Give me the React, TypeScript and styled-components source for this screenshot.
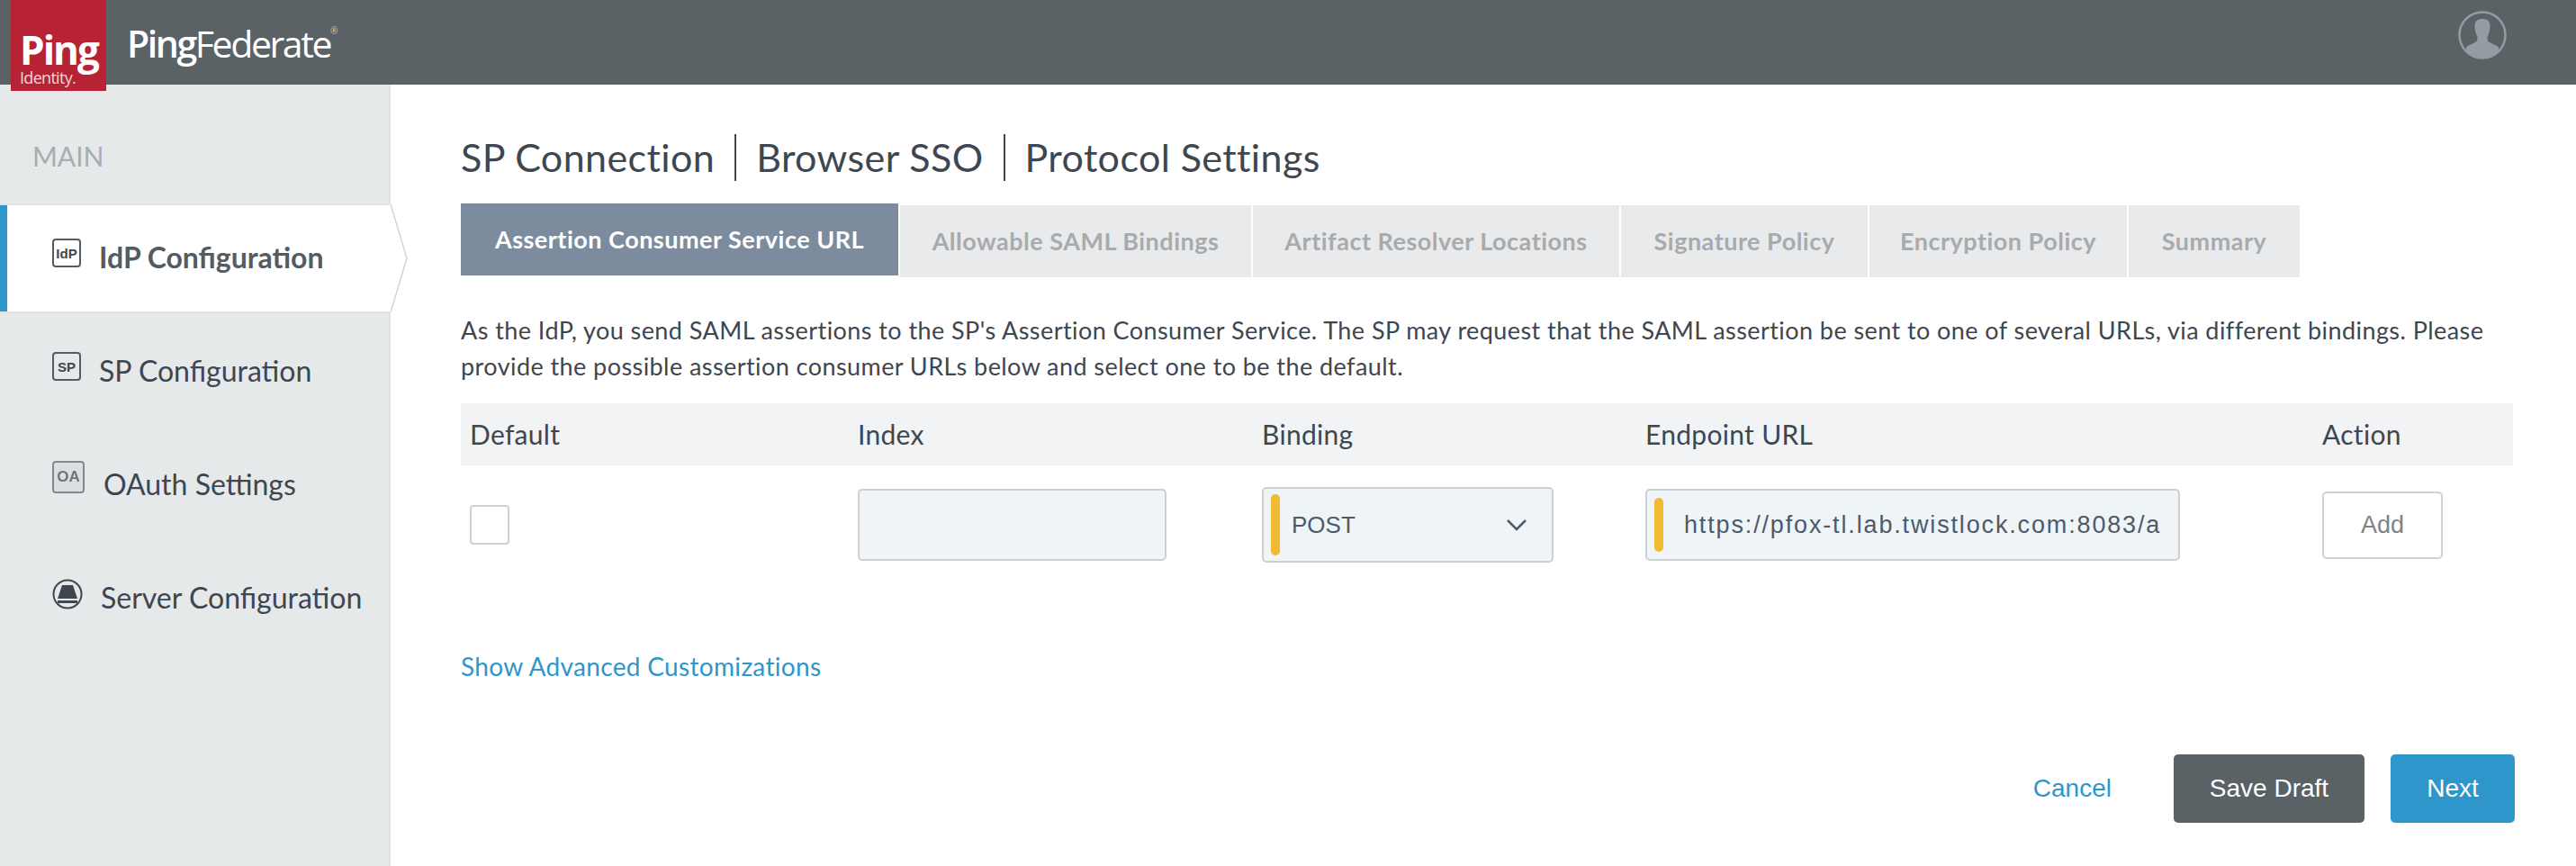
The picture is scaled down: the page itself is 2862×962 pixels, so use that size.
import React, { FC } from "react";
import styled, { createGlobalStyle } from "styled-components";

const GlobalStyle = createGlobalStyle`
  html, body {
    margin: 0;
    padding: 0;
    background: #fff;
  }
  * {
    box-sizing: border-box;
  }
  body {
    font-family: Lato, "Open Sans", sans-serif;
    color: #3e4650;
  }
`;

const Root = styled.div`
  width: 2862px;
  height: 962px;
  display: flex;
  flex-direction: column;
  overflow: hidden;
`;

const Header = styled.header`
  height: 94px;
  flex: none;
  background: #5a6266;
  display: flex;
  align-items: flex-start;
  padding: 0 77px 0 12px;
  position: relative;
  z-index: 2;
`;

const LogoBadge = styled.div`
  width: 106px;
  height: 101px;
  background: #b72334;
  color: #fff;
  display: flex;
  flex-direction: column;
  padding: 33px 0 0 10px;
`;

const LogoPing = styled.div`
  font-family: "Open Sans", sans-serif;
  font-weight: 700;
  font-size: 44px;
  line-height: 44px;
  letter-spacing: -2px;
`;

const LogoIdentity = styled.div`
  font-family: "Open Sans", sans-serif;
  font-size: 18px;
  line-height: 18px;
  letter-spacing: -0.7px;
  color: #f0d5d8;
`;

const ProductName = styled.div`
  margin: 20px 0 0 23px;
  font-family: "Open Sans", sans-serif;
  font-size: 41px;
  line-height: 56px;
  letter-spacing: -2.4px;
  color: #fff;
  b {
    font-weight: 600;
  }
  sup {
    font-size: 10px;
    letter-spacing: 0;
    vertical-align: 26px;
    line-height: 0;
    color: #c9cdcf;
  }
`;

const Avatar = styled.svg`
  width: 54px;
  height: 54px;
  margin: 12px 0 0 auto;
`;

const Body = styled.div`
  flex: 1;
  display: flex;
  min-height: 0;
`;

const Sidebar = styled.nav`
  width: 434px;
  flex: none;
  background: #e6e9ea;
  border-right: 2px solid #dfe3e5;
`;

const SideLabel = styled.div`
  height: 132px;
  padding: 59px 0 0 36px;
  font-size: 30px;
  line-height: 40px;
  color: #a7adb1;
`;

const SideItem = styled.div<{ $active?: boolean; $gap: number }>`
  position: relative;
  display: flex;
  align-items: center;
  gap: ${(p) => p.$gap}px;
  padding-left: 58px;
  height: ${(p) => (p.$active ? 122 : 126)}px;
  font-size: 32px;
  font-weight: ${(p) => (p.$active ? 700 : 400)};
  color: ${(p) => (p.$active ? "#555c61" : "#3e4650")};
  ${(p) =>
    p.$active &&
    `
    background: #fff;
    margin-right: -2px;
    border-top: 2px solid #dfe3e5;
    border-bottom: 2px solid #dfe3e5;
    box-shadow: inset 8px 0 0 #2f96cc;
    padding-bottom: 4px;
  `}
`;

const ActiveArrow = styled.svg`
  position: absolute;
  top: -2px;
  left: 100%;
  width: 19px;
  height: 122px;
`;

const BoxIcon = styled.span<{ $muted?: boolean }>`
  width: ${(p) => (p.$muted ? 36 : 32)}px;
  height: ${(p) => (p.$muted ? 36 : 32)}px;
  flex: none;
  display: flex;
  align-items: center;
  justify-content: center;
  margin-bottom: ${(p) => (p.$muted ? 14 : 8)}px;
  border: 2px solid ${(p) => (p.$muted ? "#83898d" : "#555c61")};
  border-radius: 4px;
  font-family: "Liberation Sans", sans-serif;
  font-weight: 700;
  font-size: ${(p) => (p.$muted ? 17 : 15)}px;
  color: ${(p) => (p.$muted ? "#6f7579" : "#3e4650")};
  background: ${(p) => (p.$muted ? "#dcdedf" : "transparent")};
  filter: ${(p) => (p.$muted ? "blur(0.7px)" : "none")};
`;

const ServerIcon = styled.svg`
  width: 34px;
  height: 34px;
  flex: none;
  margin-bottom: 6px;
`;

const Main = styled.main`
  flex: 1;
  min-width: 0;
  padding: 55px 70px 0 78px;
`;

const Title = styled.h1`
  margin: 0 0 25px;
  display: flex;
  font-size: 43px;
  line-height: 52px;
  font-weight: 400;
  letter-spacing: 0.4px;
  color: #3e4650;
`;

const Crumb = styled.span`
  & + & {
    margin-left: 22px;
    padding-left: 22px;
    border-left: 2px solid #3e4650;
  }
`;

const Tabs = styled.div`
  display: flex;
  align-items: flex-start;
  gap: 2px;
  margin-bottom: 39px;
`;

const Tab = styled.div<{ $active?: boolean; $width: number }>`
  width: ${(p) => p.$width}px;
  height: 80px;
  flex: none;
  margin-top: ${(p) => (p.$active ? 0 : 2)}px;
  padding-bottom: 2px;
  display: flex;
  align-items: center;
  justify-content: center;
  font-size: 27px;
  font-weight: 700;
  letter-spacing: 0.5px;
  white-space: nowrap;
  background: ${(p) => (p.$active ? "#7c8c9e" : "#e9eaec")};
  color: ${(p) => (p.$active ? "#fff" : "#a7abae")};
`;

const Intro = styled.p`
  margin: 0 0 21px;
  font-size: 27px;
  line-height: 40px;
  letter-spacing: 0.43px;
  color: #3e4650;
`;

const Columns = styled.div`
  display: grid;
  grid-template-columns: 431px 449px 426px 752px 212px;
  padding-left: 10px;
`;

const TableHead = styled(Columns)`
  height: 69px;
  padding-bottom: 2px;
  align-items: center;
  background: #f1f3f4;
  font-size: 30px;
  letter-spacing: 0.3px;
  color: #3e4650;
`;

const TableRow = styled(Columns)`
  height: 132px;
  align-items: center;
`;

const CheckBox = styled.div`
  width: 44px;
  height: 44px;
  background: #fff;
  border: 2px solid #d0d3d4;
  border-radius: 4px;
`;

const Field = styled.div<{ $width: number; $height: number; $gap?: number }>`
  width: ${(p) => p.$width}px;
  height: ${(p) => p.$height}px;
  display: flex;
  align-items: center;
  gap: ${(p) => p.$gap ?? 13}px;
  padding: 0 8px;
  background: #eff4f7;
  border: 2px solid #cdd0d2;
  border-radius: 5px;
  font-family: "Liberation Sans", sans-serif;
  font-size: 26px;
  color: #4d5a6b;
  white-space: nowrap;
  overflow: hidden;
`;

const EndpointValue = styled.span`
  font-size: 27px;
  letter-spacing: 1.85px;
`;

const RequiredBar = styled.span<{ $height: number }>`
  width: 10px;
  height: ${(p) => p.$height}px;
  flex: none;
  background: #f2b933;
  border-radius: 5px;
`;

const Chevron = styled.svg`
  width: 24px;
  height: 14px;
  flex: none;
  margin: 0 19px 0 auto;
`;

const AddButton = styled.button`
  width: 134px;
  height: 75px;
  background: #fff;
  border: 2px solid #d0d3d4;
  border-radius: 5px;
  font-family: "Liberation Sans", sans-serif;
  font-size: 27px;
  color: #808285;
`;

const AdvancedLink = styled.a`
  display: block;
  margin: 71px 0 78px;
  font-size: 28px;
  line-height: 40px;
  letter-spacing: 0.33px;
  color: #2f96cc;
`;

const Footer = styled.div`
  display: flex;
  justify-content: flex-end;
  align-items: center;
  margin-right: -2px;
`;

const CancelLink = styled.a`
  font-family: "Liberation Sans", sans-serif;
  font-size: 28px;
  color: #2f96cc;
  margin-right: 69px;
`;

const ActionButton = styled.button<{ $primary?: boolean; $width: number }>`
  width: ${(p) => p.$width}px;
  height: 76px;
  margin-left: ${(p) => (p.$primary ? 29 : 0)}px;
  border: 0;
  border-radius: 5px;
  background: ${(p) => (p.$primary ? "#2f96cc" : "#5a6266")};
  color: #fff;
  font-family: "Liberation Sans", sans-serif;
  font-size: 28px;
`;

const tabs = [
  { label: "Assertion Consumer Service URL", width: 486 },
  { label: "Allowable SAML Bindings", width: 390 },
  { label: "Artifact Resolver Locations", width: 407 },
  { label: "Signature Policy", width: 274 },
  { label: "Encryption Policy", width: 286 },
  { label: "Summary", width: 190 },
];

const App: FC = () => {
  return (
    <Root>
      <GlobalStyle />
      <Header>
        <LogoBadge>
          <LogoPing>Ping</LogoPing>
          <LogoIdentity>Identity.</LogoIdentity>
        </LogoBadge>
        <ProductName>
          <b>Ping</b>Federate<sup>®</sup>
        </ProductName>
        <Avatar viewBox="0 0 54 54">
          <defs>
            <clipPath id="avatarClip">
              <circle cx="27" cy="27" r="25" />
            </clipPath>
          </defs>
          <circle cx="27" cy="27" r="25.5" fill="none" stroke="#949ca3" strokeWidth="2.5" />
          <path
            clipPath="url(#avatarClip)"
            fill="#949ca3"
            d="M27 9c-5.500 0-8.500 2.500-8.500 8 0 4 1 8 2.500 11 1 2.500.5 5-1 6.500-3 2-8 3-11 6v14h36V40.500c-3-3-8-4-11-6-1.500-1.500-2-4-1-6.500 1.500-3 2.500-7 2.500-11 0-5.500-3-8-8.500-8z"
          />
        </Avatar>
      </Header>
      <Body>
        <Sidebar>
          <SideLabel>MAIN</SideLabel>
          <SideItem $active $gap={20}>
            <BoxIcon>IdP</BoxIcon>
            IdP Configuration
            <ActiveArrow viewBox="0 0 19 122">
              <path d="M0 1 L18 61 L0 121 Z" fill="#fff" />
              <path d="M0 1 L18 61 L0 121" fill="none" stroke="#cfd4d6" strokeWidth="1.5" />
            </ActiveArrow>
          </SideItem>
          <SideItem $gap={20}>
            <BoxIcon>SP</BoxIcon>
            SP Configuration
          </SideItem>
          <SideItem $gap={21}>
            <BoxIcon $muted>OA</BoxIcon>
            OAuth Settings
          </SideItem>
          <SideItem $gap={20}>
            <ServerIcon viewBox="0 0 34 34">
              <circle cx="17" cy="17" r="15.500" fill="none" stroke="#3e4650" strokeWidth="2" />
              <path d="M11 7h12l5 15H6z" fill="#3e4650" />
              <rect x="6" y="24" width="22" height="3" fill="#3e4650" />
            </ServerIcon>
            Server Configuration
          </SideItem>
        </Sidebar>
        <Main>
          <Title>
            <Crumb>SP Connection</Crumb>
            <Crumb>Browser SSO</Crumb>
            <Crumb>Protocol Settings</Crumb>
          </Title>
          <Tabs>
            {tabs.map((tab, i) => (
              <Tab key={tab.label} $active={i === 0} $width={tab.width}>
                {tab.label}
              </Tab>
            ))}
          </Tabs>
          <Intro>
            As the IdP, you send SAML assertions to the SP's Assertion Consumer Service. The SP may
            request that the SAML assertion be sent to one of several URLs, via different bindings.
            Please provide the possible assertion consumer URLs below and select one to be the
            default.
          </Intro>
          <TableHead>
            <div>Default</div>
            <div>Index</div>
            <div>Binding</div>
            <div>Endpoint URL</div>
            <div>Action</div>
          </TableHead>
          <TableRow>
            <CheckBox />
            <Field $width={343} $height={80} />
            <Field $width={324} $height={84}>
              <RequiredBar $height={68} />
              POST
              <Chevron viewBox="0 0 24 14">
                <path d="M2 2l10 10L22 2" fill="none" stroke="#4d5a6b" strokeWidth="2.500" />
              </Chevron>
            </Field>
            <Field $width={594} $height={80} $gap={23}>
              <RequiredBar $height={60} />
              <EndpointValue>https://pfox-tl.lab.twistlock.com:8083/a</EndpointValue>
            </Field>
            <AddButton>Add</AddButton>
          </TableRow>
          <AdvancedLink>Show Advanced Customizations</AdvancedLink>
          <Footer>
            <CancelLink>Cancel</CancelLink>
            <ActionButton $width={212}>Save Draft</ActionButton>
            <ActionButton $primary $width={138}>
              Next
            </ActionButton>
          </Footer>
        </Main>
      </Body>
    </Root>
  );
};

export default App;
